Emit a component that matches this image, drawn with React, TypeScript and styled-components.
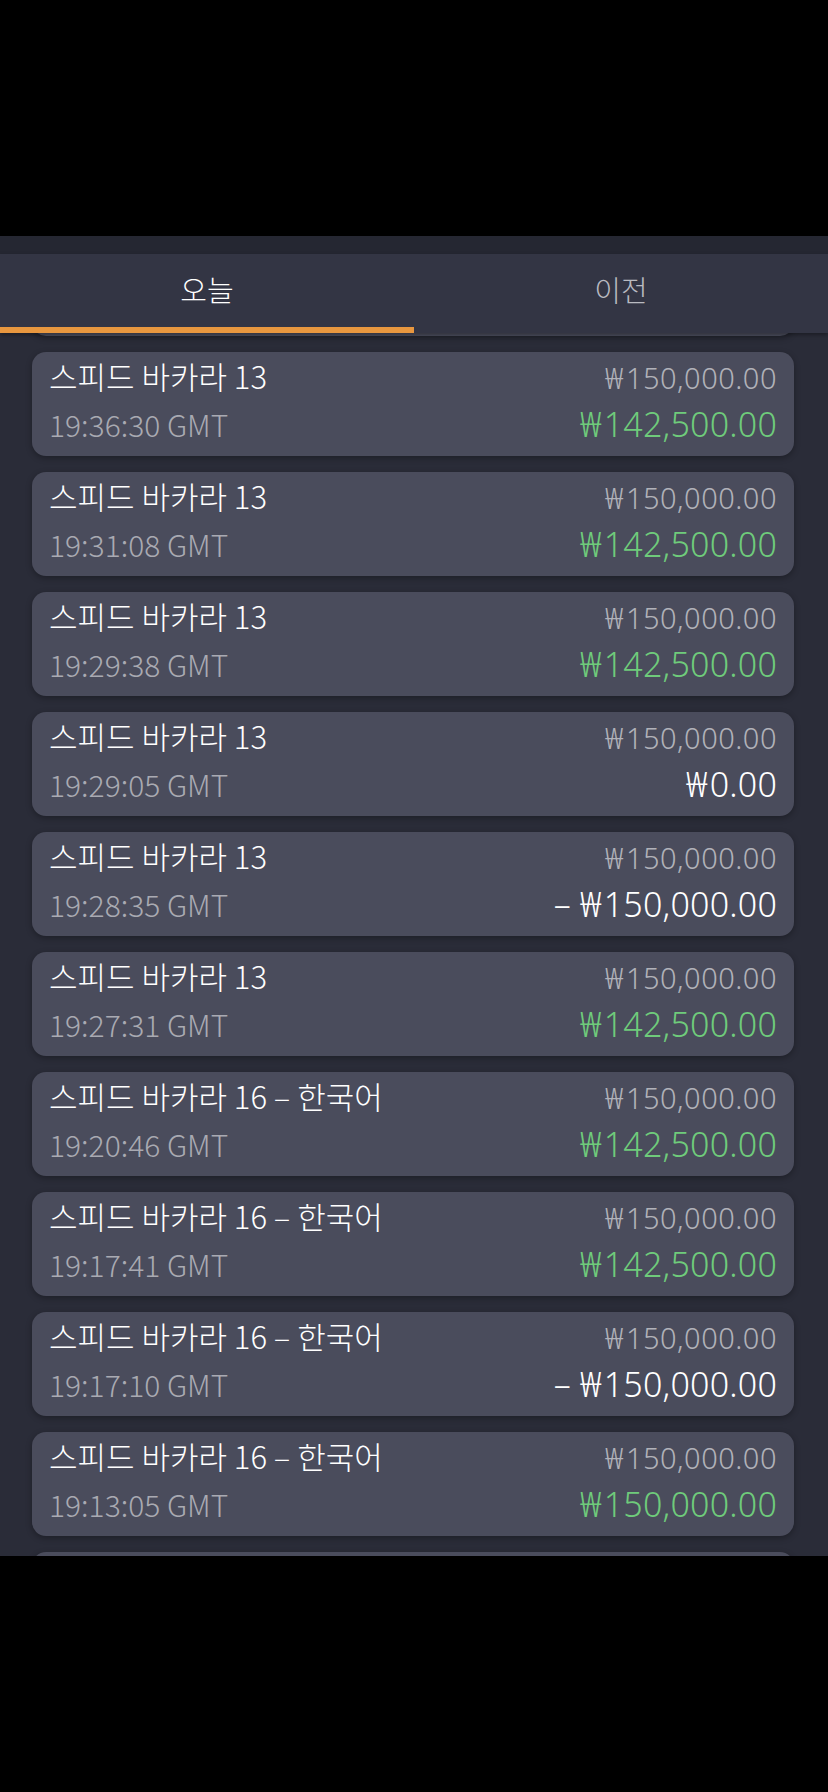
import React, { ReactElement } from "react";
import styled, { createGlobalStyle } from "styled-components";

type Result = "win" | "even" | "lose";

interface Bet {
  game: string;
  time: string;
  stake: string;
  payout: string;
  result: Result;
}

const T13 = "스피드 바카라 13";
const T16 = "스피드 바카라 16 – 한국어";

const bets: Bet[] = [
  { game: T13, time: "19:36:30 GMT", stake: "150,000.00", payout: "142,500.00", result: "win" },
  { game: T13, time: "19:31:08 GMT", stake: "150,000.00", payout: "142,500.00", result: "win" },
  { game: T13, time: "19:29:38 GMT", stake: "150,000.00", payout: "142,500.00", result: "win" },
  { game: T13, time: "19:29:05 GMT", stake: "150,000.00", payout: "0.00", result: "even" },
  { game: T13, time: "19:28:35 GMT", stake: "150,000.00", payout: "150,000.00", result: "lose" },
  { game: T13, time: "19:27:31 GMT", stake: "150,000.00", payout: "142,500.00", result: "win" },
  { game: T16, time: "19:20:46 GMT", stake: "150,000.00", payout: "142,500.00", result: "win" },
  { game: T16, time: "19:17:41 GMT", stake: "150,000.00", payout: "142,500.00", result: "win" },
  { game: T16, time: "19:17:10 GMT", stake: "150,000.00", payout: "150,000.00", result: "lose" },
  { game: T16, time: "19:13:05 GMT", stake: "150,000.00", payout: "150,000.00", result: "win" },
];

const GlobalStyle = createGlobalStyle`
  * {
    box-sizing: border-box;
  }

  body {
    margin: 0;
    background: #000000;
    font-family: "Noto Sans CJK KR", "Noto Sans", sans-serif;
  }
`;

function Money({ value, negative }: { value: string; negative?: boolean }): ReactElement {
  return (
    <>
      {negative && "– "}
      <Won>₩</Won>
      {value}
    </>
  );
}

function App(): ReactElement {
  return (
    <Page>
      <GlobalStyle />
      <Backdrop />
      <Sheet>
        <Handle />
        <TabBar>
          <Tab active>오늘</Tab>
          <Tab>이전</Tab>
        </TabBar>
        <List>
          <Scroller>
            {/* rows only peeking out of the scroll area */}
            <Card />
            {bets.map((bet, i) => (
              <Card key={i}>
                <Row>
                  <Title>{bet.game}</Title>
                  <Stake>
                    <Money value={bet.stake} />
                  </Stake>
                </Row>
                <Row>
                  <Time>{bet.time}</Time>
                  <Payout result={bet.result}>
                    <Money value={bet.payout} negative={bet.result === "lose"} />
                  </Payout>
                </Row>
              </Card>
            ))}
            <Card />
          </Scroller>
        </List>
      </Sheet>
      <Backdrop />
    </Page>
  );
}

const Page = styled.div`
  display: flex;
  flex-direction: column;
  width: 828px;
  height: 1792px;
  background: #000000;
`;

const Backdrop = styled.div`
  flex: 1;
  background: #000000;
`;

const Sheet = styled.section`
  display: flex;
  flex-direction: column;
  flex: none;
  background: #2a2c38;
`;

const Handle = styled.div`
  height: 18px;
  background: #252732;
`;

const TabBar = styled.nav`
  display: flex;
  height: 79px;
  background: #333544;
  box-shadow: 0 2px 4px rgba(0, 0, 0, 0.35);
  position: relative;
  z-index: 1;
`;

const Tab = styled.div<{ active?: boolean }>`
  flex: 1;
  display: flex;
  align-items: center;
  justify-content: center;
  padding-bottom: 4px;
  border-bottom: 6px solid ${(p) => (p.active ? "#e8973f" : "transparent")};
  font-size: 29px;
  font-weight: 300;
  color: ${(p) => (p.active ? "#ffffff" : "#b9bac1")};
`;

const List = styled.div`
  height: 1223px;
  overflow: hidden;
`;

const Scroller = styled.div`
  display: flex;
  flex-direction: column;
  gap: 16px;
  margin-top: -101px;
  padding: 0 34px 0 32px;
`;

const Card = styled.div`
  display: flex;
  flex-direction: column;
  flex: none;
  height: 104px;
  padding: 0 17px;
  border-radius: 14px;
  background: #4a4c5c;
  box-shadow: 0 2px 6px rgba(0, 0, 0, 0.3);
`;

const Row = styled.div`
  display: flex;
  justify-content: space-between;
  align-items: baseline;
  height: 48px;
  line-height: 48px;
  white-space: nowrap;
  font-weight: 300;
`;

const Title = styled.span`
  font-size: 31px;
  color: #ffffff;
`;

const Time = styled.span`
  font-size: 30px;
  color: #a9aab2;
`;

const Amount = styled.span`
  font-family: "Noto Sans", "Noto Sans CJK KR", sans-serif;
  font-weight: 300;
`;

const Won = styled.span`
  font-family: "DejaVu Sans", "Noto Sans", sans-serif;
  font-weight: 300;
  margin-right: 2px;
`;

const Stake = styled(Amount)`
  font-size: 29px;
  letter-spacing: 0.5px;
  color: #b1b2b9;
`;

const Payout = styled(Amount)<{ result: Result }>`
  font-size: 34px;
  letter-spacing: 0.2px;
  color: ${(p) => (p.result === "win" ? "#6fcb7b" : "#ffffff")};
`;

export default App;
